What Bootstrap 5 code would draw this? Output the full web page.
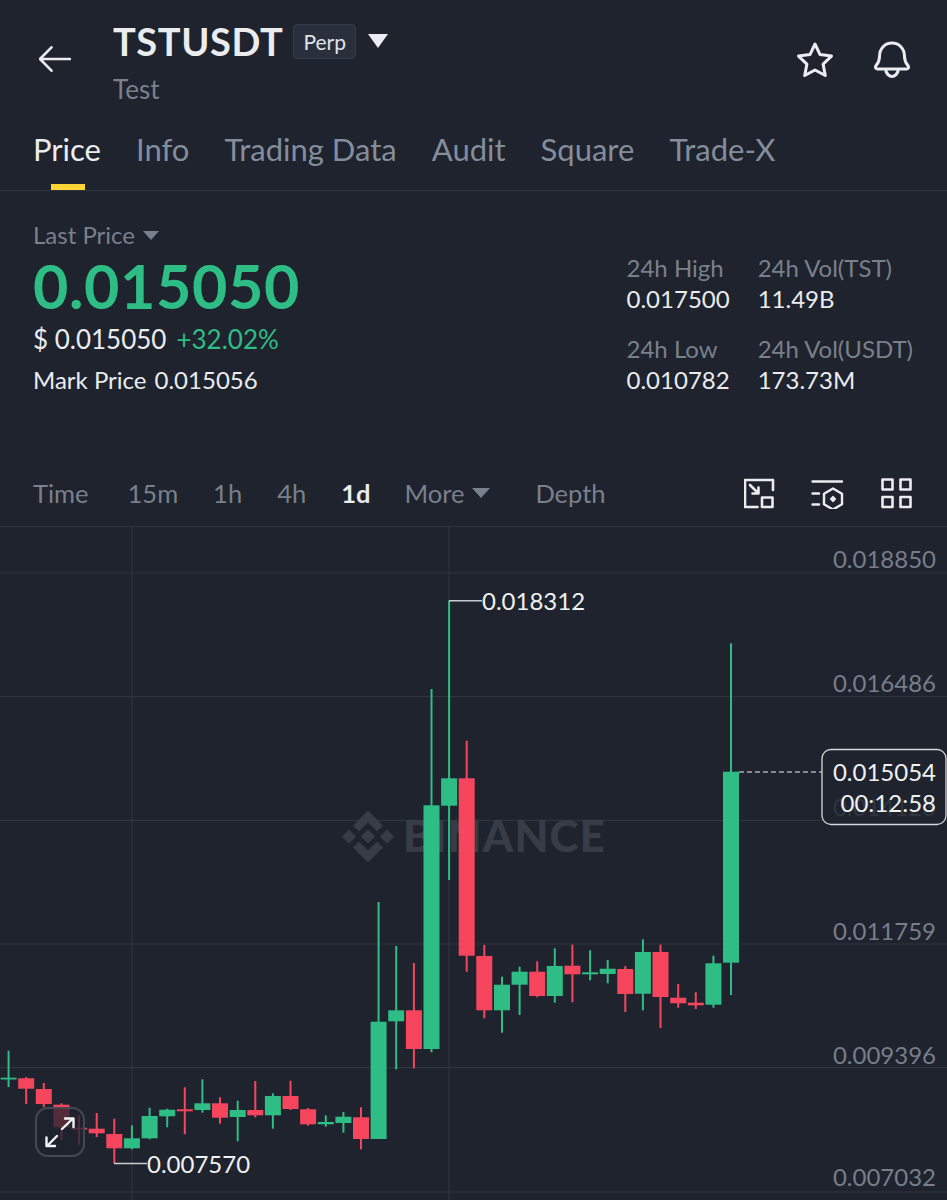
<!doctype html>
<html lang="en">
<head>
<meta charset="utf-8">
<title>TSTUSDT</title>
<link href="https://cdn.jsdelivr.net/npm/bootstrap@5.3.0/dist/css/bootstrap.min.css" rel="stylesheet">
<style>
html,body{background:#1e232d;}
body{width:947px;height:1200px;overflow:hidden;color:#eaecef;font-family:Lato,"Liberation Sans",sans-serif;}
.tt-head{height:124px;padding:0 37px 0 39px;}
.tt-back{width:32px;height:36px;margin-top:41px;margin-right:42px;flex:none;}
.tt-titles{padding-top:18px;}
.tt-symbol{font-size:38px;font-weight:700;line-height:46px;letter-spacing:.6px;color:#eaecef;}
.tt-perp{margin-left:10px;font-size:21px;line-height:33px;height:35px;padding:0 9px;background:#2a303b;border:1px solid #353b46;border-radius:4px;color:#dfe2e7;}
.tt-caret{margin-left:12px;width:20px;height:14px;}
.tt-sub{font-size:26px;line-height:30px;margin-top:10px;color:#79808c;}
.tt-head-icons{gap:40px;padding-top:41px;}
.tt-tabs{height:67px;border-bottom:1px solid #2e343e;padding-left:33px;gap:35px;font-size:31px;line-height:51px;color:#848d9b;}
.tt-tab{position:relative;}
.tt-tab.is-on{color:#eaecef;}
.tt-tab.is-on::after{content:"";position:absolute;left:18px;width:34px;bottom:0;height:6px;background:#fcd535;}
.tt-stats{height:268px;padding:0 34px 0 33px;}
.tt-left{padding-top:30px;}
.tt-lbl{font-size:24px;line-height:28px;color:#79808c;}
.tt-big{font-size:61px;font-weight:700;line-height:70px;color:#2ebd85;margin-top:2px;letter-spacing:.6px;}
.tt-usd{font-size:26px;line-height:32px;margin-top:2px;color:#eaecef;}
.tt-up{color:#2ebd85;margin-left:10px;}
.tt-mark{font-size:24px;line-height:28px;margin-top:11px;}
.tt-mark span+span{margin-left:8px;}
.tt-right{padding-top:61px;gap:28px;font-size:24px;}
.tt-cell-l{line-height:31px;color:#79808c;}
.tt-cell-v{line-height:31px;color:#eaecef;margin-bottom:19px;}
.tt-bar{height:68px;padding:1px 33px 0;font-size:25.5px;color:#79808c;border-bottom:1px solid #2e343e;}
.tt-periods{gap:35px;}
.tt-first{margin-right:4px;}
.tt-depth{margin-left:10px;}
.tt-icons{gap:36px;margin-right:2px;}
.tt-bar .tt-on{color:#eaecef;font-weight:700;margin-right:-1px;}
.tt-chart{height:673px;position:relative;overflow:hidden;}
.tt-chart svg{display:block;}
.tt-expand{position:absolute;left:35px;top:580px;width:50px;height:50px;border:2px solid #434851;border-radius:13px;background:rgba(30,35,45,.75);display:flex;align-items:center;justify-content:center;}
.tt-axis{font-size:24px;fill:#777e8a;font-family:Lato,"Liberation Sans",sans-serif;}
.tt-val{font-size:24px;fill:#f0f1f3;font-family:Lato,"Liberation Sans",sans-serif;}
.tt-mk{font-size:44px;font-weight:900;fill:#373c46;font-family:Lato,"Liberation Sans",sans-serif;letter-spacing:1px;}
</style>
</head>
<body>
<div class="tt-head d-flex">
  <svg class="tt-back" viewBox="0 0 32 36" fill="none" stroke="#eaecef" stroke-width="2.6" stroke-linecap="round" stroke-linejoin="round"><path d="M1 18H31M12.500 6.300 1 18l11.500 11.700"/></svg>
  <div class="tt-titles flex-grow-1">
    <div class="d-flex align-items-center">
      <span class="tt-symbol">TSTUSDT</span>
      <span class="tt-perp">Perp</span>
      <svg class="tt-caret" viewBox="0 0 20 14"><path d="M0 0H20L10 14Z" fill="#eaecef"/></svg>
    </div>
    <div class="tt-sub">Test</div>
  </div>
  <div class="tt-head-icons d-flex align-items-start">
    <svg width="38" height="38" viewBox="0 0 38 38" fill="none" stroke="#eaecef" stroke-width="3" stroke-linejoin="round"><path d="M19 3l5 10.600 11.500 1.500-8.400 8 2.200 11.400L19 29l-10.300 5.500 2.200-11.400-8.400-8L14 13.600Z"/></svg>
    <svg width="36" height="38" viewBox="0 0 36 38" fill="none" stroke="#eaecef" stroke-width="3" stroke-linecap="round" stroke-linejoin="round"><path d="M3.500 28c-1.800 0-2.600-1.800-1.500-3.200 2.500-3 3.500-5 3.500-9.300C5.500 7.500 11 2 18 2s12.500 5.500 12.500 13.500c0 4.300 1 6.300 3.500 9.300 1.100 1.400.3 3.200-1.500 3.200ZM11.500 28c.5 5 4 7.500 6.500 7.500s6-2.500 6.500-7.500"/></svg>
  </div>
</div>
<div class="tt-tabs d-flex">
  <div class="tt-tab is-on">Price</div><div class="tt-tab">Info</div><div class="tt-tab">Trading Data</div><div class="tt-tab">Audit</div><div class="tt-tab">Square</div><div class="tt-tab">Trade-X</div>
</div>
<div class="tt-stats d-flex justify-content-between">
  <div class="tt-left">
    <div class="tt-lbl d-flex align-items-center">Last Price<svg class="ms-2" width="16" height="9" viewBox="0 0 16 9"><path d="M0 0H16L8 9Z" fill="#79808c"/></svg></div>
    <div class="tt-big">0.015050</div>
    <div class="tt-usd">$ 0.015050<span class="tt-up">+32.02%</span></div>
    <div class="tt-mark"><span>Mark Price</span><span>0.015056</span></div>
  </div>
  <div class="tt-right d-flex">
    <div><div class="tt-cell-l">24h High</div><div class="tt-cell-v">0.017500</div><div class="tt-cell-l">24h Low</div><div class="tt-cell-v">0.010782</div></div>
    <div><div class="tt-cell-l">24h Vol(TST)</div><div class="tt-cell-v">11.49B</div><div class="tt-cell-l">24h Vol(USDT)</div><div class="tt-cell-v">173.73M</div></div>
  </div>
</div>
<div class="tt-bar d-flex align-items-center justify-content-between">
  <div class="tt-periods d-flex align-items-center">
    <span class="tt-first">Time</span><span>15m</span><span>1h</span><span>4h</span><span class="tt-on">1d</span>
    <span class="d-flex align-items-center">More<svg class="ms-2" width="18" height="10" viewBox="0 0 18 10"><path d="M0 0H18L9 10Z" fill="#79808c"/></svg></span>
    <span class="tt-depth">Depth</span>
  </div>
  <div class="tt-icons d-flex align-items-center">
    <svg width="31" height="31" viewBox="745 478 31 31" fill="none" stroke="#eaecef" stroke-width="2.600" stroke-linecap="round" stroke-linejoin="round"><path d="M774 490V480H746V507H758.500"/><path d="M763 497.500H773.500V507H763Z"/><path d="M751 485l8.500 8.500M759.500 487.500v6h-6"/></svg>
    <svg width="34" height="31" viewBox="812 478 34 31" fill="none" stroke="#eaecef" stroke-width="2.400" stroke-linecap="round" stroke-linejoin="round"><path d="M813.500 481.500H843M813.500 493.500H820M813.500 504.500H820"/><path d="M834 488.500l9 5.200v10.600l-9 5.200-9-5.200V493.700Z"/><path d="M834 496.500l2.500 2.500-2.500 2.500-2.500-2.500Z" fill="#eaecef" stroke-width="1.200"/></svg>
    <svg width="31" height="31" viewBox="881 478 31 31" fill="none" stroke="#eaecef" stroke-width="2.600" stroke-linejoin="round"><path d="M882.500 479.500h10v10h-10ZM900.500 479.500h10v10h-10ZM882.500 497h10v10h-10ZM900.500 497h10v10h-10Z"/></svg>
  </div>
</div>
<div class="tt-chart">
  <svg id="chart" width="947" height="673" viewBox="0 527 947 673" xmlns="http://www.w3.org/2000/svg">
    <g stroke="#2f343e" stroke-width="1.200"><path d="M0 573H947M0 696.500H947M0 820.300H947M0 944H947M0 1067.700H947M0 1192H947M132 527V1200M449 527V1200"/></g>
    <g transform="translate(368 836.500)" fill="#373c46"><path d="M0-26 15-11 9-5 0-14-9-5-15-11ZM-26 0-19-7-12 0-19 7ZM0-7 7 0 0 7-7 0ZM19-7 26 0 19 7 12 0ZM-15 11-9 5 0 14 9 5 15 11 0 26Z"/></g>
    <text class="tt-mk" x="403" y="852">BINANCE</text>
    <g id="candles"></g>
    <text class="tt-axis" x="936" y="568" text-anchor="end">0.018850</text>
    <text class="tt-axis" x="936" y="692" text-anchor="end">0.016486</text>
    <text class="tt-axis" x="936" y="816" text-anchor="end">0.014123</text>
    <text class="tt-axis" x="936" y="940" text-anchor="end">0.011759</text>
    <text class="tt-axis" x="936" y="1064" text-anchor="end">0.009396</text>
    <text class="tt-axis" x="936" y="1186" text-anchor="end">0.007032</text>
    <path d="M449 600.700H482M114 1163.500H147" stroke="#c9ccd1" stroke-width="1.500" fill="none"/>
    <text class="tt-val" x="482" y="610">0.018312</text>
    <text class="tt-val" x="147" y="1173">0.007570</text>
    <path d="M739 772H822" stroke="#eaecef" stroke-width="1.200" stroke-dasharray="5 3" fill="none"/>
    <rect x="822" y="749.500" width="124" height="75" rx="9" fill="#1e232d" fill-opacity=".8" stroke="#d5d7db" stroke-width="1.300"/>
    <text class="tt-val" x="936" y="781" text-anchor="end">0.015054</text>
    <text class="tt-val" x="936" y="812" text-anchor="end">00:12:58</text>
  </svg>
  <div class="tt-expand">
    <svg width="34" height="34" viewBox="0 0 34 34" fill="none" stroke="#f2f3f5" stroke-width="2.400" stroke-linecap="round" stroke-linejoin="round"><path d="M19 14 30 3.500M22 3.500H30.500V12M4 31 14 21M3.500 22.500V31H12"/></svg>
  </div>
</div>
<script>
var G='#2ebd85',R='#f6465d';
var d=[
[G,1050.7,1087,1077.7,1079.5],[R,1077,1104,1078.3,1088.7],[R,1083,1107,1089,1104],[R,1103.3,1140,1104.7,1127.3],
[R,1115,1145,1127.7,1129.5],[R,1113,1137,1128.7,1133.3],[R,1118.7,1163,1134,1148.3],[G,1125.3,1149.3,1138.3,1148.3],
[G,1107.7,1139.3,1116,1138.3],[G,1108.7,1127.3,1109.7,1116.3],[R,1087.3,1134.3,1109.3,1111.3],[G,1079.3,1112.7,1103.3,1110],
[R,1097.3,1123.7,1103.3,1117.7],[G,1100.7,1141.3,1110,1117],[R,1081,1117.3,1110,1115.3],[G,1093.3,1128.7,1096,1115.3],
[R,1080.7,1110,1096,1109],[R,1108,1125.7,1109.3,1124.3],[G,1115.3,1126.7,1122,1124.3],[G,1112,1132.7,1116.7,1123],
[R,1107.3,1149.3,1117.3,1139],[G,902,1139,1021.7,1139],[G,946,1069.3,1010.3,1021.3],[R,963,1068.3,1010.3,1049],
[G,689,1052.3,805.3,1049],[G,600.7,880,778.3,805.7],[R,740.7,971.7,778.3,955.7],[R,945,1018.3,956,1010.3],
[G,976.7,1032.7,984.7,1010.3],[G,966.7,1015,971.7,984.7],[R,961.3,997.3,971.7,996],[G,948.3,1002.7,966,996],
[R,944.7,1002.3,965.7,974.3],[G,950.3,980.3,972.3,974.3],[G,960,983.3,968.7,974],[R,966,1012,969,994],
[G,939.3,1010.3,952,993.7],[R,944.7,1028,952,997],[R,984,1007.7,997.7,1003.3],[R,992.3,1009,1002.7,1005.3],
[G,955.7,1007.7,963.3,1004.7],[G,643.3,995,771.7,962.7]];
var s='';
d.forEach(function(c,i){
  var x=8.6+17.62*i, t=Math.min(c[3],c[4]), b=Math.max(c[3],c[4]);
  s+='<rect x="'+(x-1).toFixed(1)+'" y="'+c[1]+'" width="2" height="'+(c[2]-c[1]).toFixed(1)+'" fill="'+c[0]+'"/>';
  s+='<rect x="'+(x-8).toFixed(1)+'" y="'+t+'" width="16" height="'+(b-t).toFixed(1)+'" fill="'+c[0]+'"/>';
});
document.getElementById('candles').innerHTML=s;
</script>
<script src="https://cdn.jsdelivr.net/npm/bootstrap@5.3.0/dist/js/bootstrap.bundle.min.js"></script>
</body>
</html>
